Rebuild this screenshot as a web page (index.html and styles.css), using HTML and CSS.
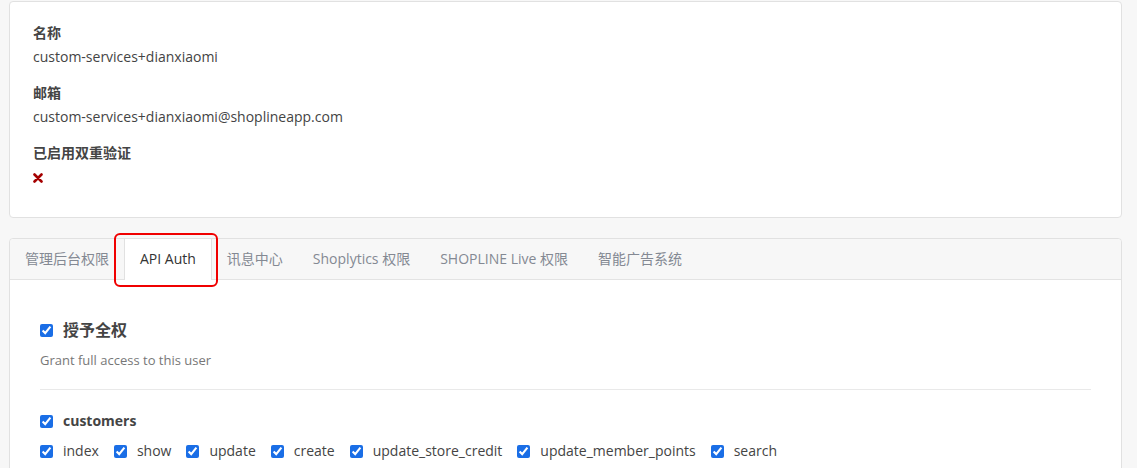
FILE: index.html
```html
<!DOCTYPE html>
<html lang="zh-CN">
<head>
    <meta charset="UTF-8">
    <meta name="viewport" content="width=device-width, initial-scale=1.0">
    <title>员工权限</title>
    <link rel="stylesheet" href="styles.css">
</head>
<body>
    <div class="page">
        <div class="card info-card">
            <div class="field">
                <div class="field-label">名称</div>
                <div class="field-value">custom-services+dianxiaomi</div>
            </div>
            <div class="field">
                <div class="field-label">邮箱</div>
                <div class="field-value">custom-services+dianxiaomi@shoplineapp.com</div>
            </div>
            <div class="field">
                <div class="field-label">已启用双重验证</div>
                <div class="field-value">
                    <svg class="icon-cross" width="10" height="10" viewBox="0 0 10 10">
                        <path d="M1.5 1.5 L8.5 8.5 M8.5 1.5 L1.5 8.5" stroke="#a50000" stroke-width="2.6" stroke-linecap="round"/>
                    </svg>
                </div>
            </div>
        </div>

        <div class="card perm-card">
            <div class="tabs">
                <div class="tab">管理后台权限</div>
                <div class="tab tab-active">API Auth<span class="highlight"></span></div>
                <div class="tab">讯息中心</div>
                <div class="tab">Shoplytics 权限</div>
                <div class="tab">SHOPLINE Live 权限</div>
                <div class="tab">智能广告系统</div>
            </div>

            <div class="tab-body">
                <label class="full-access">
                    <input type="checkbox" checked>
                    <span>授予全权</span>
                </label>
                <div class="full-access-desc">Grant full access to this user</div>

                <div class="divider"></div>

                <label class="group-title">
                    <input type="checkbox" checked>
                    <span>customers</span>
                </label>
                <div class="perm-list">
                    <label class="perm"><input type="checkbox" checked><span>index</span></label>
                    <label class="perm"><input type="checkbox" checked><span>show</span></label>
                    <label class="perm"><input type="checkbox" checked><span>update</span></label>
                    <label class="perm"><input type="checkbox" checked><span>create</span></label>
                    <label class="perm"><input type="checkbox" checked><span>update_store_credit</span></label>
                    <label class="perm"><input type="checkbox" checked><span>update_member_points</span></label>
                    <label class="perm"><input type="checkbox" checked><span>search</span></label>
                </div>
            </div>
        </div>
    </div>
</body>
</html>
```

FILE: styles.css
```css
body {
    margin: 0;
    background: #f7f7f7;
    font-family: "Open Sans", "Noto Sans CJK SC", sans-serif;
    font-size: 14px;
    color: #444;
    overflow: hidden;
}
.page {
    padding: 1px 15px 0 9px;
}
.card {
    background: white;
    border: 1px solid #e1e1e1;
    border-radius: 4px;
}
.info-card {
    padding: 21px 23px 30px 23px;
}
.field {
    margin-bottom: 16px;
}
.field:last-child {
    margin-bottom: 0;
}
.field-label {
    font-weight: bold;
    line-height: 20px;
    color: #444;
    margin-bottom: 4px;
}
.field-value {
    line-height: 20px;
    color: #444;
}
.icon-cross {
    vertical-align: middle;
}
.perm-card {
    margin-top: 20px;
    height: 240px;
}
.tabs {
    display: flex;
    height: 40px;
    background: #f7f7f7;
    border-bottom: 1px solid #e3e3e3;
    border-radius: 4px 4px 0 0;
}
.tab {
    position: relative;
    padding: 0 15px;
    line-height: 40px;
    color: #848993;
}
.tab-active {
    background: white;
    color: #333;
    border-left: 1px solid #e1e1e1;
    border-right: 1px solid #e1e1e1;
    height: 41px;
}
.highlight {
    position: absolute;
    left: -11px;
    right: -7px;
    top: -6px;
    bottom: -7px;
    border: 2px solid #f00000;
    border-radius: 6px;
}
.tab-body {
    padding: 38px 30px 0 30px;
}
input[type="checkbox"] {
    width: 13px;
    height: 13px;
    margin: 0 10px 0 0;
    accent-color: #1a6ee6;
    flex-shrink: 0;
}
.full-access {
    display: flex;
    align-items: center;
    line-height: 24px;
    font-size: 16px;
    font-weight: bold;
    color: #444;
}
.full-access-desc {
    margin-top: 9px;
    line-height: 18px;
    font-size: 13px;
    color: #777;
}
.divider {
    margin-top: 20px;
    height: 1px;
    background: #e9e9e9;
}
.group-title {
    display: flex;
    align-items: center;
    margin-top: 21px;
    line-height: 20px;
    font-weight: bold;
    color: #444;
}
.perm-list {
    display: flex;
    gap: 15px;
    margin-top: 10px;
}
.perm {
    display: flex;
    align-items: center;
    line-height: 20px;
    color: #444;
}
```
